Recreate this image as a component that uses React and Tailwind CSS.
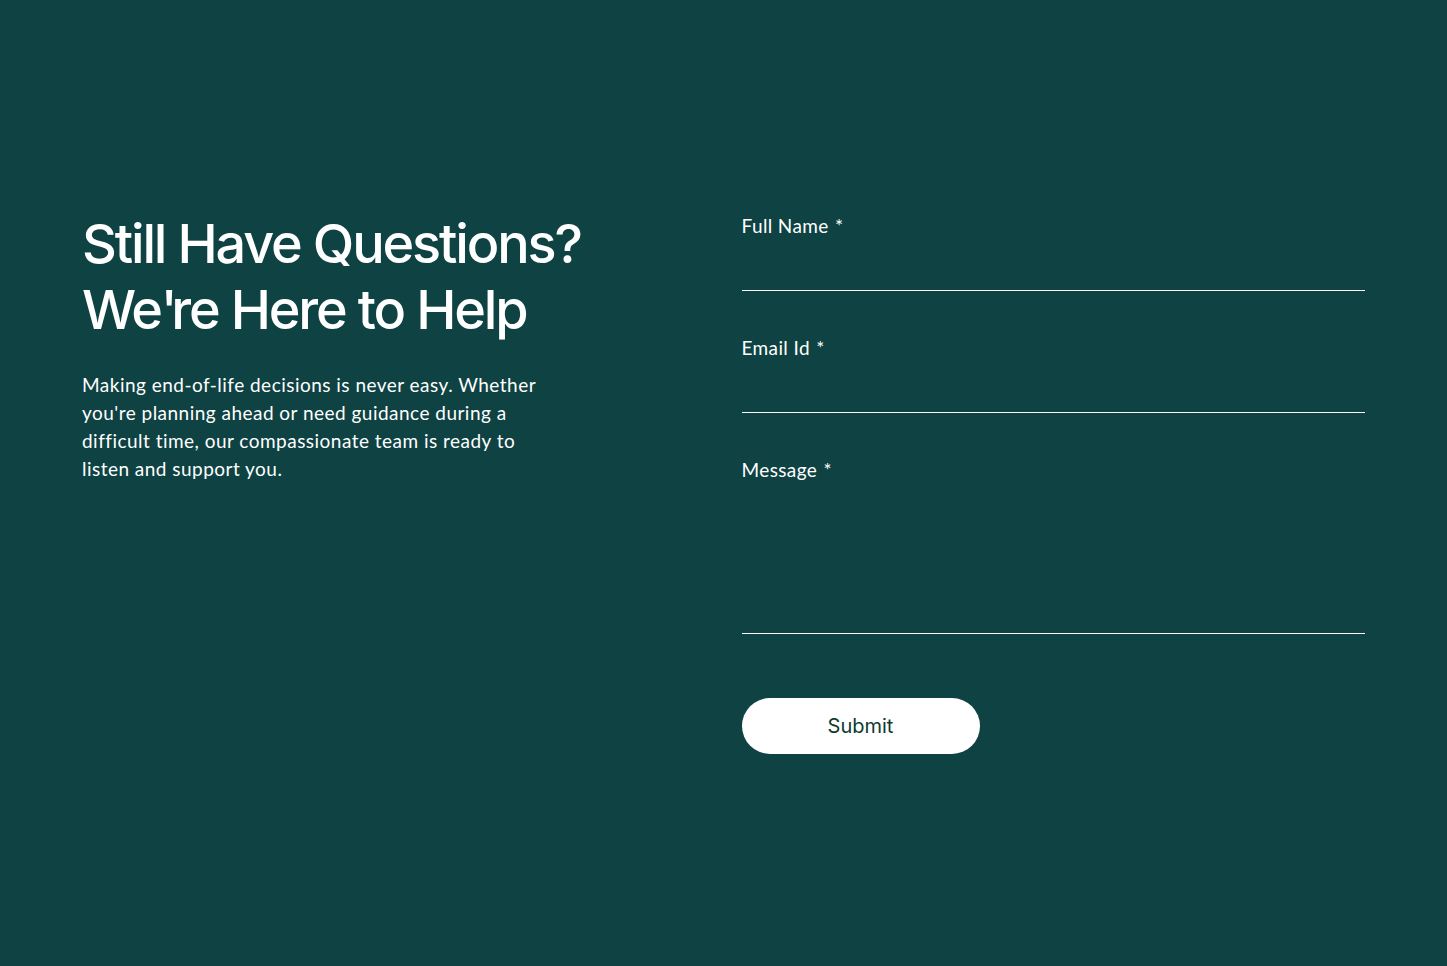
import React, { useState } from 'react';

function Field({ label, name, multiline, value, onChange }) {
  return (
    <div className="flex flex-col">
      <label htmlFor={name} className="text-[19px] leading-[26px] tracking-[0.02em] text-white font-['Lato',sans-serif]">
        {label} <span className="ml-[1px]">*</span>
      </label>
      {multiline ? (
        <textarea
          id={name}
          name={name}
          value={value}
          onChange={onChange}
          className="h-[151px] resize-none bg-transparent border-b border-white text-white outline-none font-['Lato',sans-serif] text-[18px]"
        />
      ) : (
        <input
          id={name}
          name={name}
          value={value}
          onChange={onChange}
          className="h-[52px] bg-transparent border-b border-white text-white outline-none font-['Lato',sans-serif] text-[18px]"
        />
      )}
    </div>
  );
}

export default function App() {
  const [form, setForm] = useState({ name: '', email: '', message: '' });

  const handleChange = (e) => {
    setForm({ ...form, [e.target.name]: e.target.value });
  };

  return (
    <div className="min-h-screen w-full bg-[#0e4243] flex items-center px-[82px]">
      <div className="grid w-full grid-cols-2 gap-9">
        <div className="-mt-[2px]">
          <h2 className="text-[54px] leading-[66px] font-medium tracking-[-0.04em] text-white font-['Inter',sans-serif]">
            Still Have Questions?
            <br />
            We<span className="tracking-[-0.12em]">'</span>re Here to Help
          </h2>
          <p className="mt-[28px] max-w-[470px] text-[19px] leading-[28px] tracking-[0.025em] text-white font-['Lato',sans-serif]">
            Making end-of-life decisions is never easy. Whether you're planning ahead or need guidance during a difficult
            time, our compassionate team is ready to listen and support you.
          </p>
        </div>
        <form onSubmit={(e) => e.preventDefault()} className="flex flex-col">
          <div className="flex flex-col gap-[44px]">
            <Field label="Full Name" name="name" value={form.name} onChange={handleChange} />
            <Field label="Email Id" name="email" value={form.email} onChange={handleChange} />
            <Field label="Message" name="message" multiline value={form.message} onChange={handleChange} />
          </div>
          <button
            type="submit"
            className="mt-[64px] h-[56px] w-[238px] rounded-full bg-white text-[20px] text-[#0d3b30] font-['Inter',sans-serif]"
          >
            Submit
          </button>
        </form>
      </div>
    </div>
  );
}
